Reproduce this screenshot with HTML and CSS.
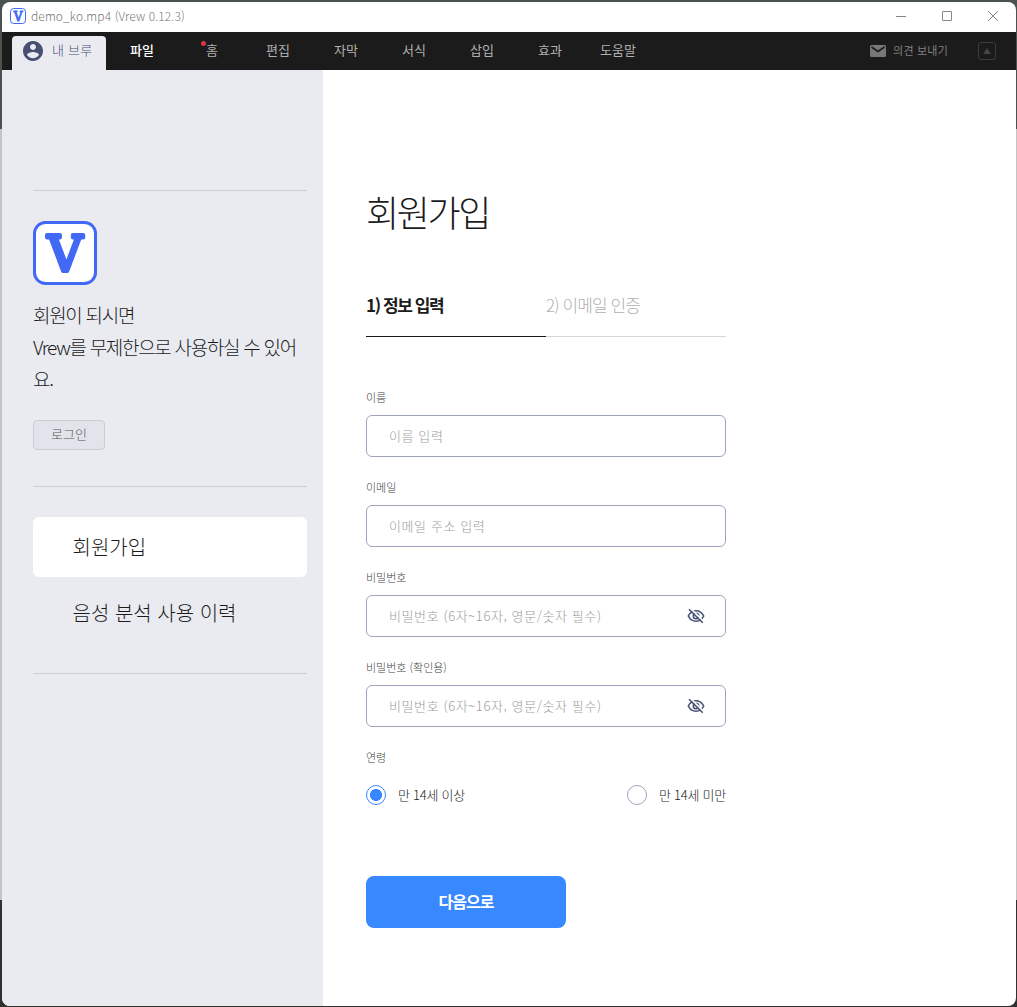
FILE: index.html
```html
<!DOCTYPE html>
<html lang="ko">
<head>
    <meta charset="UTF-8">
    <meta name="viewport" content="width=device-width, initial-scale=1.0">
    <title>demo_ko.mp4 (Vrew 0.12.3)</title>
    <link rel="stylesheet" href="styles.css">
</head>
<body>

<div class="window">
    <!-- Title bar -->
    <header class="titlebar">
        <svg class="app-icon" viewBox="0 0 64 64">
            <rect x="2" y="2" width="60" height="60" rx="13" fill="#fff" stroke="#4169f5" stroke-width="4"/>
            <text class="logo-v" x="14.5" y="50" textLength="35" lengthAdjust="spacingAndGlyphs">V</text>
        </svg>
        <span class="window-title">demo_ko.mp4 (Vrew 0.12.3)</span>
        <div class="window-buttons">
            <svg viewBox="0 0 12 12"><path d="M1 6.5h10"/></svg>
            <svg viewBox="0 0 12 12"><rect x="1.5" y="1.5" width="9" height="9" rx="0.5"/></svg>
            <svg viewBox="0 0 12 12"><path d="M1 1l10 10M11 1L1 11"/></svg>
        </div>
    </header>

    <!-- Menu bar -->
    <nav class="menubar">
        <a class="my-vrew">
            <svg viewBox="2 2 20 20" width="20" height="20"><path fill="#475073" d="M12 2C6.48 2 2 6.48 2 12s4.48 10 10 10 10-4.48 10-10S17.52 2 12 2zm0 3c1.66 0 3 1.34 3 3s-1.34 3-3 3-3-1.34-3-3 1.34-3 3-3zm0 14.2c-2.5 0-4.71-1.28-6-3.22.03-1.99 4-3.08 6-3.08 1.99 0 5.97 1.09 6 3.08-1.29 1.94-3.5 3.22-6 3.22z"/></svg>
            <span>내 브루</span>
        </a>
        <ul class="menu">
            <li class="active">파일</li>
            <li><span class="new">홈</span></li>
            <li>편집</li>
            <li>자막</li>
            <li>서식</li>
            <li>삽입</li>
            <li>효과</li>
            <li>도움말</li>
        </ul>
        <a class="feedback">
            <svg viewBox="0 0 16 12" width="16" height="12"><rect width="16" height="12" rx="1.5" fill="#777"/><path d="M1.5 2L8 6.5 14.5 2" fill="none" stroke="#1b1b1b" stroke-width="1.6"/></svg>
            <span>의견 보내기</span>
        </a>
        <button class="collapse" type="button">
            <svg viewBox="0 0 8 6" width="8" height="6"><path d="M4 0l4 6H0z" fill="#444"/></svg>
        </button>
    </nav>

    <div class="content">
        <aside class="sidebar">
            <section class="intro">
                <svg class="logo" viewBox="0 0 64 64">
                    <rect x="1.5" y="1.5" width="61" height="61" rx="11" fill="#fff" stroke="#4169f5" stroke-width="3"/>
                    <text class="logo-v" x="14.5" y="50" textLength="35" lengthAdjust="spacingAndGlyphs">V</text>
                </svg>
                <p>회원이 되시면<br>Vrew를 무제한으로 사용하실 수 있어<br>요.</p>
                <button class="login" type="button">로그인</button>
            </section>
            <section class="side-menu">
                <a class="selected">회원가입</a>
                <a>음성 분석 사용 이력</a>
            </section>
        </aside>

        <main class="signup">
            <h1>회원가입</h1>
            <div class="steps">
                <div class="step current">1) 정보 입력</div>
                <div class="step">2) 이메일 인증</div>
            </div>

            <form>
                <div class="field">
                    <label for="name">이름</label>
                    <div class="input-box"><input type="text" id="name" placeholder="이름 입력"></div>
                </div>
                <div class="field">
                    <label for="email">이메일</label>
                    <div class="input-box"><input type="email" id="email" placeholder="이메일 주소 입력"></div>
                </div>
                <div class="field">
                    <label for="password">비밀번호</label>
                    <div class="input-box">
                        <input type="password" id="password" placeholder="비밀번호 (6자~16자, 영문/숫자 필수)">
                        <svg class="eye" viewBox="0 0 18 16"><path d="M1.3 8C3 4.6 5.7 2.8 9 2.8S15 4.6 16.7 8C15 11.4 12.3 13.2 9 13.2S3 11.4 1.3 8z"/><circle cx="9" cy="8" r="2.7"/><path class="gap" d="M3.6 .4l14 14"/><path d="M2 1.2l13.7 13.6"/></svg>
                    </div>
                </div>
                <div class="field">
                    <label for="password2">비밀번호 (확인용)</label>
                    <div class="input-box">
                        <input type="password" id="password2" placeholder="비밀번호 (6자~16자, 영문/숫자 필수)">
                        <svg class="eye" viewBox="0 0 18 16"><path d="M1.3 8C3 4.6 5.7 2.8 9 2.8S15 4.6 16.7 8C15 11.4 12.3 13.2 9 13.2S3 11.4 1.3 8z"/><circle cx="9" cy="8" r="2.7"/><path class="gap" d="M3.6 .4l14 14"/><path d="M2 1.2l13.7 13.6"/></svg>
                    </div>
                </div>
                <div class="age-label">연령</div>
                <div class="ages">
                    <label><input type="radio" name="age" checked><span>만 14세 이상</span></label>
                    <label><input type="radio" name="age"><span>만 14세 미만</span></label>
                </div>
                <button class="next" type="button">다음으로</button>
            </form>
        </main>
    </div>
</div>

</body>
</html>
```
FILE: styles.css
```css
* {
    margin: 0;
    padding: 0;
    box-sizing: border-box;
}

body {
    height: 100vh;
    padding: 2px 1px 1px 2px;
    overflow: hidden;
    background: linear-gradient(#4b534f 0, #4b534f 129px, #c4c4c6 129px, #c4c4c6 900px, #303230 900px);
    font-family: 'Noto Sans CJK KR', sans-serif;
    font-weight: 300;
    color: #1b1b1b;
}

input, button {
    font-family: inherit;
    font-weight: inherit;
}

.window {
    height: 1004px;
    display: flex;
    flex-direction: column;
    background: #fff;
    border-radius: 8px;
    overflow: hidden;
}

/* title bar */
.titlebar {
    height: 30px;
    display: flex;
    align-items: center;
    padding: 0 17px 2px 8px;
}

.app-icon {
    width: 16px;
    height: 16px;
}

.logo-v {
    font-family: 'DejaVu Serif', serif;
    font-weight: normal;
    font-size: 48px;
    fill: #4169f5;
    stroke: #4169f5;
    stroke-width: 4;
    stroke-linejoin: round;
}

.window-title {
    margin-left: 5px;
    font-size: 12px;
    line-height: 20px;
    letter-spacing: 0.1px;
    color: #777;
}

.window-buttons {
    margin-left: auto;
    display: flex;
    gap: 34px;
}

.window-buttons svg {
    width: 12px;
    height: 12px;
    fill: none;
    stroke: #858585;
}

/* menu bar */
.menubar {
    height: 38px;
    display: flex;
    align-items: center;
    padding-right: 20px;
    background: #1b1b1b;
    font-size: 13px;
    font-weight: 400;
    line-height: 20px;
    color: #b0b0b0;
}

.my-vrew {
    width: 94px;
    height: 34px;
    margin: 4px 0 0 10px;
    padding: 0 0 4px 11px;
    display: flex;
    align-items: center;
    gap: 9px;
    background: #eaebf1;
    border-radius: 4px 4px 0 0;
    color: #475073;
}

.my-vrew span {
    padding-bottom: 2px;
    letter-spacing: 0.2px;
    font-weight: 300;
}

.menu {
    display: flex;
    list-style: none;
    margin-left: 2px;
    padding-bottom: 2px;
}

.menu li {
    width: 68px;
    text-align: center;
}

.menu .active {
    color: #fff;
    font-weight: 500;
}

.new {
    position: relative;
    left: 2px;
}

.new::before {
    content: '';
    position: absolute;
    left: -5px;
    top: 1px;
    width: 5px;
    height: 5px;
    border-radius: 50%;
    background: #dc3545;
}

.feedback {
    margin-left: auto;
    display: flex;
    align-items: center;
    gap: 7px;
    font-size: 11px;
    letter-spacing: 0.2px;
    color: #808080;
}

.feedback span {
    padding-bottom: 2px;
}

.collapse {
    width: 18px;
    height: 18px;
    margin-left: 30px;
    display: flex;
    align-items: center;
    justify-content: center;
    background: none;
    border: 1px solid #3c3c3c;
    border-radius: 3px;
}

.content {
    flex: 1;
    display: flex;
}

/* sidebar */
.sidebar {
    width: 321px;
    padding: 120px 16px 0 31px;
    background: #eaebf1;
}

.intro {
    height: 296px;
    padding-top: 30px;
    border-top: 1px solid #cccdd3;
}

.logo {
    display: block;
    width: 64px;
    height: 64px;
}

.intro p {
    margin: 14px 0 25px;
    font-size: 19px;
    line-height: 32px;
    letter-spacing: -1.3px;
    white-space: nowrap;
}

.login {
    width: 72px;
    height: 30px;
    padding-bottom: 3px;
    font-size: 13px;
    color: #555;
    background: #e2e4eb;
    border: 1px solid #cccdd3;
    border-radius: 4px;
}

.side-menu {
    height: 188px;
    padding-top: 30px;
    display: flex;
    flex-direction: column;
    gap: 6px;
    border-top: 1px solid #cccdd3;
    border-bottom: 1px solid #cccdd3;
}

.side-menu a {
    height: 60px;
    padding-left: 39.5px;
    font-size: 20px;
    line-height: 60px;
    border-radius: 6px;
}

.side-menu .selected {
    background: #fff;
}

/* sign up form */
.signup {
    width: 403px;
    padding: 115px 0 0 43px;
}

.signup h1 {
    font-size: 36px;
    font-weight: 300;
    line-height: 52px;
    letter-spacing: -2.4px;
}

.steps {
    display: flex;
    margin: 43px 0 50px;
}

.step {
    width: 180px;
    height: 57px;
    padding-top: 13px;
    border-bottom: 1px solid #d3d4dc;
    font-size: 17px;
    line-height: 24px;
    letter-spacing: -0.9px;
    color: #b0b0b0;
}

.step.current {
    font-weight: 700;
    letter-spacing: -1.4px;
    color: #1b1b1b;
    border-color: #1b1b1b;
}

.field {
    margin-bottom: 20px;
}

.field label, .age-label {
    display: block;
    font-size: 11px;
    line-height: 20px;
    color: #444;
}

.input-box {
    height: 42px;
    margin-top: 8px;
    padding: 0 20px 0 22px;
    display: flex;
    align-items: center;
    border: 1px solid #9ea4bd;
    border-radius: 6px;
}

.input-box input {
    flex: 1;
    min-width: 0;
    height: 40px;
    padding-bottom: 2px;
    border: none;
    outline: none;
    background: none;
    font-size: 13px;
    letter-spacing: 0.6px;
}

.input-box input::placeholder {
    color: #9c9c9c;
}

.eye {
    width: 18px;
    height: 16px;
    fill: none;
    stroke: #475073;
    stroke-width: 1.6;
}

.eye .gap {
    stroke: #fff;
}

.ages {
    display: flex;
    justify-content: space-between;
    margin: 18px 0 71px;
}

.ages label {
    display: flex;
    align-items: center;
    gap: 12px;
    font-size: 13px;
    line-height: 20px;
    letter-spacing: -0.25px;
}

.ages input {
    appearance: none;
    width: 20px;
    height: 20px;
    border: 1px solid #9ea4bd;
    border-radius: 50%;
}

.ages input:checked {
    border-color: #3888ff;
    background: radial-gradient(circle, #3888ff 5.7px, #fff 6.3px);
}

.next {
    display: block;
    width: 200px;
    height: 52px;
    padding-bottom: 3px;
    background: #3888ff;
    border: none;
    border-radius: 8px;
    color: #fff;
    font-size: 16px;
    font-weight: 700;
    letter-spacing: -1px;
}
```
